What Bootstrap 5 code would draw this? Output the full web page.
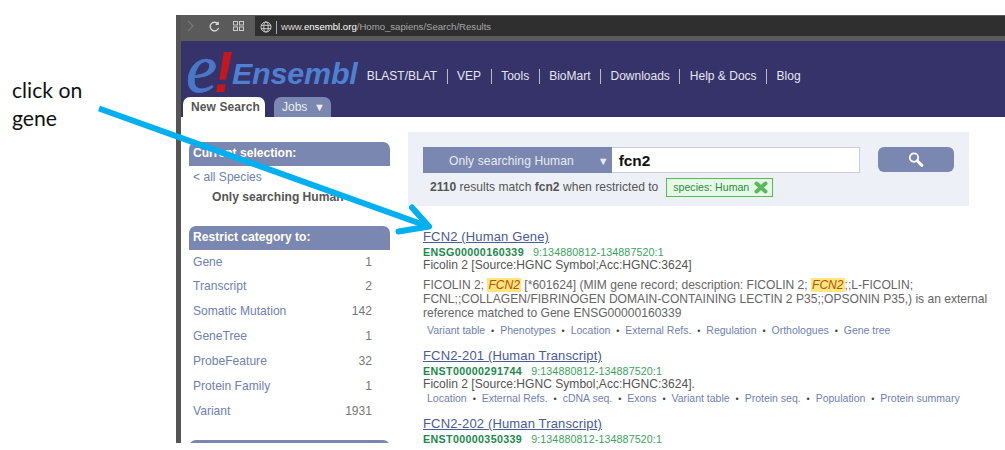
<!DOCTYPE html>
<html lang="en"><head><meta charset="utf-8"><title>Ensembl search</title>
<link href="https://cdn.jsdelivr.net/npm/bootstrap@5.3.0/dist/css/bootstrap.min.css" rel="stylesheet">
<style>
html,body{margin:0;height:450px;overflow:hidden;background:#fff}
body{font-family:"Liberation Sans",Arial,sans-serif;font-size:12.08px;color:#555;position:relative;width:1005px}
a{text-decoration:none;color:#7080b8}
.note-col{width:176px;flex:none;padding:76px 0 0 12px;font-family:Lato,"Open Sans",sans-serif;font-size:21.2px;line-height:28px;color:#111}
.shot{width:829px;height:428px;margin-top:15px;border-left:5px solid #555;overflow:hidden;flex:none}
.chrome{height:26px;background:#5a5a5a;padding:1px 0 5px;flex:none}
.chrome-left{width:74px;color:#ccc;padding-left:6px;gap:15px;height:100%}
.chrome-left svg:last-child{margin-left:-2px}
.url-bar{background:#2f2f2f;color:#a8a8a8;font-size:9.6px;height:100%;padding:2px 0 0 5px;gap:4px}
.url-bar b{color:#ddd;font-weight:400}
.url-sep{width:1px;height:13px;background:#aaa}
.mast{height:76px;background:#35336a;flex:none;position:relative}
.logo-row{height:56px;padding:8px 0 0 5px}
.logo-e{font:italic 400 70px/40px "Liberation Serif",serif;color:#4a78c8;-webkit-text-stroke:.7px #4a78c8;width:29px;display:block;margin-top:-8px}
.logo-bang{font:italic 700 57px/40px "Liberation Sans",sans-serif;color:#c8161e;width:17px;margin-top:-2px;margin-left:-1px}
.logo-word{font:italic 700 30.4px/40px "Liberation Sans",sans-serif;color:#4f80d2;margin-left:1px;margin-top:-1px;letter-spacing:-.15px}
.top-nav{margin-left:9px;margin-top:6px;color:#e6e6f0;font-size:12px}
.top-nav span{padding:0 9.5px;border-left:1px solid #bbb;line-height:15px}
.top-nav span:first-child{border-left:0;padding-left:0}
.tab-row{padding-left:2px;gap:9px;height:20px}
.tab-on,.tab-off{border-radius:7px 7px 0 0;height:20px;line-height:20px;padding:0 0 0 8px;font-size:12px;white-space:nowrap}
.tab-on{background:#fff;font-weight:700;color:#555;width:82px;letter-spacing:.1px}
.tab-off{background:#7a87b0;color:#eee;width:57px}
.tri{font-size:11px}
.page{padding:15px 0 0 8px;background:#fff}
.side{width:201px;flex:none;margin:10px 18px 0 0}
.side-head{background:#7a87b0;color:#fff;font-weight:700;height:23.5px;line-height:22px;padding-left:4px;border-radius:7px 7px 0 0}
.side-list{padding:0 18px 0 4px}
.side-row{height:24.9px;line-height:24px;color:#7080b8}
.side-row span:last-child{color:#777}
.sel-box{height:60.5px;padding:1px 0 0 4px;line-height:20px}
.sel-box b{display:block;padding-left:19px;color:#555}
.main-col{width:561px;flex:none}
.search-box{height:74px;background:#edf0f6;padding:15px 15px 0 15px}
.sp-select{width:189px;height:26px;background:#7a87b0;color:#e8ebf4;line-height:28px;padding:0 3px 0 26px;letter-spacing:.1px}
.sp-input{width:249px;height:26px;background:#fff;border:1px solid #ccd;border-left:0;color:#111;font-weight:700;font-size:15.4px;line-height:26px;padding-left:7px}
.sp-btn{width:76px;height:25px;margin-left:18px;background:#7a87b0;border-radius:6px}
.sp-line{margin-top:5px;gap:8px;height:19px;line-height:19px;padding-left:7px}
.sp-tag{background:#e6f9e6;border:1px solid #4fbf4f;color:#2c8a45;font-size:10.6px;height:19px;line-height:17px;padding:0 4px 0 6px;gap:5px}
.result{padding-left:15px;margin-top:23px;width:580px}
.result + .result{margin-top:10px}
.r-title{font-size:13px;line-height:15px;color:#4a5a9a;text-decoration:underline;display:block;letter-spacing:.15px}
.r-id{color:#1b8a4c;font-size:10.7px;line-height:12px;margin-top:2px}
.r-id b{letter-spacing:.35px;margin-right:6px}
.r-id span{color:#3aa45e;letter-spacing:.01em}
.r-desc{line-height:14px;color:#555}
.r-long{line-height:14px;margin-top:6px;color:#666}
.r-long em{background:#ffe680;color:#b5500a;padding:0 1px}
.r-links{font-size:10.5px;line-height:13px;margin-top:4px;padding-left:4px;color:#555}
.r-links.tight{margin-top:1px}
.r-links i{font-style:normal;margin:0 3px;color:#444;font-size:9px}
.arrow-layer{position:absolute;left:0;top:0;pointer-events:none}
</style></head>
<body>
<div class="d-flex">
  <div class="note-col">click on<br>gene</div>
  <div class="shot d-flex flex-column">
    <div class="chrome d-flex">
      <div class="chrome-left d-flex align-items-center">
        <svg width="7" height="12" viewBox="0 0 7 12" fill="none" stroke="#777" stroke-width="1.2"><path d="M1 1l5 5-5 5"/></svg>
        <svg width="11" height="11" viewBox="0 0 12 12" fill="none" stroke="#ddd" stroke-width="1.4"><path d="M10.5 7.5A4.7 4.7 0 1 1 9.6 3M10 .8V3.6H7.2"/></svg>
        <svg width="11" height="10" viewBox="0 0 11 10" fill="none" stroke="#ccc" stroke-width="1"><rect x=".5" y=".5" width="4" height="3.5"/><rect x="6.5" y=".5" width="4" height="3.5"/><rect x=".5" y="6" width="4" height="3.5"/><rect x="6.5" y="6" width="4" height="3.5"/></svg>
      </div>
      <div class="url-bar flex-grow-1 d-flex align-items-center">
        <svg width="12" height="12" viewBox="0 0 12 12" fill="none" stroke="#ccc" stroke-width="1"><circle cx="6" cy="6" r="5"/><ellipse cx="6" cy="6" rx="2.2" ry="5"/><path d="M1 4.300h10M1 7.700h10"/></svg>
        <div class="url-sep"></div>
        <span><b>www.</b><b class="text-white">ensembl.org</b>/Homo_sapiens/Search/Results</span>
      </div>
    </div>
    <div class="mast">
      <div class="logo-row d-flex align-items-center">
        <span class="logo-e">e</span><span class="logo-bang">!</span><span class="logo-word">Ensembl</span>
        <div class="top-nav d-flex"><span>BLAST/BLAT</span><span>VEP</span><span>Tools</span><span>BioMart</span><span>Downloads</span><span>Help &amp; Docs</span><span>Blog</span></div>
      </div>
      <div class="tab-row d-flex"><div class="tab-on">New Search</div><div class="tab-off">Jobs &nbsp;<span class="tri">▼</span></div></div>
    </div>
    <div class="page d-flex flex-grow-1">
      <div class="side">
        <div class="side-head">Current selection:</div>
        <div class="sel-box"><a href="#">&lt; all Species</a><b>Only searching Human</b></div>
        <div class="side-head">Restrict category to:</div>
        <div class="side-list">
          <div class="side-row d-flex justify-content-between"><span>Gene</span><span>1</span></div>
          <div class="side-row d-flex justify-content-between"><span>Transcript</span><span>2</span></div>
          <div class="side-row d-flex justify-content-between"><span>Somatic Mutation</span><span>142</span></div>
          <div class="side-row d-flex justify-content-between"><span>GeneTree</span><span>1</span></div>
          <div class="side-row d-flex justify-content-between"><span>ProbeFeature</span><span>32</span></div>
          <div class="side-row d-flex justify-content-between"><span>Protein Family</span><span>1</span></div>
          <div class="side-row d-flex justify-content-between"><span>Variant</span><span>1931</span></div>
        </div>
        <div class="side-head mt-3"></div>
      </div>
      <div class="main-col">
        <div class="search-box">
          <div class="d-flex">
            <div class="sp-select d-flex justify-content-between"><span>Only searching Human</span><span class="tri">▼</span></div>
            <div class="sp-input">fcn2</div>
            <div class="sp-btn d-flex align-items-center justify-content-center">
              <svg width="16" height="15" viewBox="0 0 16 15" fill="none" stroke="#fff"><circle cx="6" cy="5.600" r="4.200" stroke-width="1.800"/><path d="M9.200 8.800l4.600 4.600" stroke-width="3" stroke-linecap="round"/></svg>
            </div>
          </div>
          <div class="sp-line d-flex">
            <span><b>2110</b> results match <b>fcn2</b> when restricted to</span>
            <span class="sp-tag d-flex align-items-center">species: Human
              <svg width="14" height="13" viewBox="0 0 14 13"><path d="M2.500 2.500L11.500 10.500M11.500 2.500L2.500 10.500" stroke="#5cb85c" stroke-width="4" stroke-linecap="round"/></svg>
            </span>
          </div>
        </div>
        <div class="result">
          <a class="r-title" href="#">FCN2 (Human Gene)</a>
          <div class="r-id"><b>ENSG00000160339</b> <span>9:134880812-134887520:1</span></div>
          <div class="r-desc">Ficolin 2 [Source:HGNC Symbol;Acc:HGNC:3624]</div>
          <div class="r-long">FICOLIN 2; <em>FCN2</em> [*601624] (MIM gene record; description: FICOLIN 2; <em>FCN2</em>;;L-FICOLIN; FCNL;;COLLAGEN/FIBRINOGEN DOMAIN-CONTAINING LECTIN 2 P35;;OPSONIN P35,) is an external reference matched to Gene ENSG00000160339</div>
          <div class="r-links"><a href="#">Variant table</a> <i>•</i> <a href="#">Phenotypes</a> <i>•</i> <a href="#">Location</a> <i>•</i> <a href="#">External Refs.</a> <i>•</i> <a href="#">Regulation</a> <i>•</i> <a href="#">Orthologues</a> <i>•</i> <a href="#">Gene tree</a></div>
        </div>
        <div class="result">
          <a class="r-title" href="#">FCN2-201 (Human Transcript)</a>
          <div class="r-id"><b>ENST00000291744</b> <span>9:134880812-134887520:1</span></div>
          <div class="r-desc">Ficolin 2 [Source:HGNC Symbol;Acc:HGNC:3624].</div>
          <div class="r-links tight"><a href="#">Location</a> <i>•</i> <a href="#">External Refs.</a> <i>•</i> <a href="#">cDNA seq.</a> <i>•</i> <a href="#">Exons</a> <i>•</i> <a href="#">Variant table</a> <i>•</i> <a href="#">Protein seq.</a> <i>•</i> <a href="#">Population</a> <i>•</i> <a href="#">Protein summary</a></div>
        </div>
        <div class="result">
          <a class="r-title" href="#">FCN2-202 (Human Transcript)</a>
          <div class="r-id"><b>ENST00000350339</b> <span>9:134880812-134887520:1</span></div>
        </div>
      </div>
    </div>
  </div>
</div>
<svg class="arrow-layer" width="1005" height="450" viewBox="0 0 1005 450"><path d="M99 108.500L427 226" stroke="#00b0f0" stroke-width="6" fill="none"/><path d="M412 207.500L429 226.500L398.500 231.500" stroke="#00b0f0" stroke-width="6" stroke-linecap="round" stroke-linejoin="round" fill="none"/></svg>
</body></html>
